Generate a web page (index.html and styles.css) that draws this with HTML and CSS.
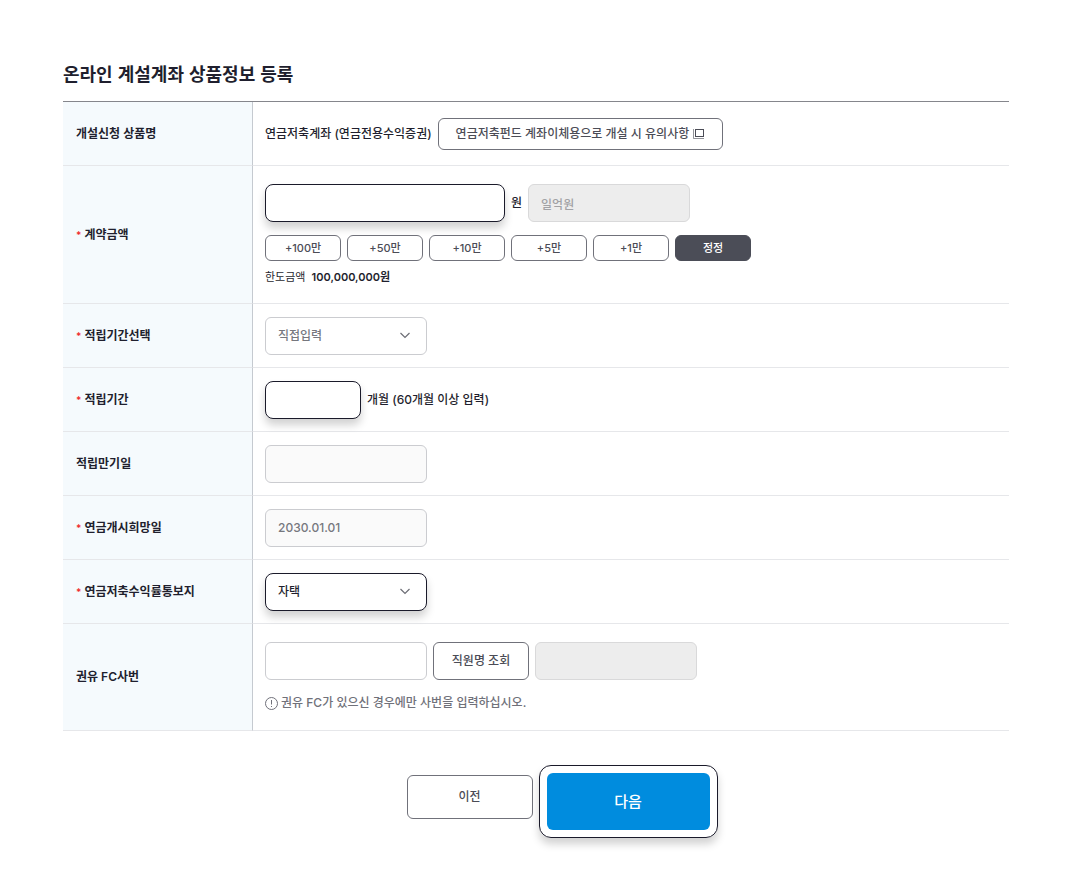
FILE: index.html
```html
<!DOCTYPE html>
<html lang="ko">
<head>
    <meta charset="UTF-8">
    <meta name="viewport" content="width=device-width, initial-scale=1.0">
    <title>온라인 계설계좌 상품정보 등록</title>
    <link rel="stylesheet" href="styles.css">
</head>
<body>
<main class="page">
    <h1 class="title">온라인 계설계좌 상품정보 등록</h1>

    <form onsubmit="return false">
        <table class="form-table">
            <tr>
                <th scope="row">개설신청 상품명</th>
                <td>
                    <div class="line">
                        <span>연금저축계좌 (연금전용수익증권)</span>
                        <button type="button" class="btn btn-notice">
                            연금저축펀드 계좌이체용으로 개설 시 유의사항
                            <svg width="12" height="12" viewBox="0 0 12 12" fill="none" stroke="currentColor">
                                <rect x="2.5" y="1.5" width="8" height="7"/>
                                <path d="M0.5 1v9.500h10.500" stroke-opacity="0.6"/>
                            </svg>
                        </button>
                    </div>
                </td>
            </tr>
            <tr>
                <th scope="row"><label for="amount"><span class="required">*</span>계약금액</label></th>
                <td class="stack">
                    <div class="line">
                        <input type="text" id="amount" class="field field-wide active">
                        <label for="amount">원</label>
                        <input type="text" class="field disabled" value="일억원" aria-label="한글 금액" disabled>
                    </div>
                    <div class="line amounts">
                        <button type="button" class="btn btn-small">+100만</button>
                        <button type="button" class="btn btn-small">+50만</button>
                        <button type="button" class="btn btn-small">+10만</button>
                        <button type="button" class="btn btn-small">+5만</button>
                        <button type="button" class="btn btn-small">+1만</button>
                        <button type="button" class="btn btn-small btn-dark">정정</button>
                    </div>
                    <p class="limit">한도금액 <strong>100,000,000원</strong></p>
                </td>
            </tr>
            <tr>
                <th scope="row"><label for="term-type"><span class="required">*</span>적립기간선택</label></th>
                <td>
                    <div class="select">
                        <select id="term-type" class="field muted">
                            <option>직접입력</option>
                        </select>
                        <svg class="chevron" width="12" height="12" viewBox="0 0 12 12" fill="none" stroke="currentColor" stroke-width="1.2"><path d="M1.500 4L6 8.500 10.500 4"/></svg>
                    </div>
                </td>
            </tr>
            <tr>
                <th scope="row"><label for="term"><span class="required">*</span>적립기간</label></th>
                <td>
                    <div class="line">
                        <input type="text" id="term" class="field field-short active">
                        <label for="term">개월 (60개월 이상 입력)</label>
                    </div>
                </td>
            </tr>
            <tr>
                <th scope="row"><label for="maturity">적립만기일</label></th>
                <td><input type="text" id="maturity" class="field readonly" readonly></td>
            </tr>
            <tr>
                <th scope="row"><label for="start-date"><span class="required">*</span>연금개시희망일</label></th>
                <td><input type="text" id="start-date" class="field readonly" value="2030.01.01" readonly></td>
            </tr>
            <tr>
                <th scope="row"><label for="notice"><span class="required">*</span>연금저축수익률통보지</label></th>
                <td>
                    <div class="select">
                        <select id="notice" class="field active">
                            <option>자택</option>
                        </select>
                        <svg class="chevron" width="12" height="12" viewBox="0 0 12 12" fill="none" stroke="currentColor" stroke-width="1.2"><path d="M1.500 4L6 8.500 10.500 4"/></svg>
                    </div>
                </td>
            </tr>
            <tr>
                <th scope="row"><label for="fc">권유 FC사번</label></th>
                <td class="stack">
                    <div class="line">
                        <input type="text" id="fc" class="field">
                        <button type="button" class="btn btn-search">직원명 조회</button>
                        <input type="text" class="field disabled" aria-label="직원명" disabled>
                    </div>
                    <p class="help">
                        <svg width="13" height="13" viewBox="0 0 13 13" fill="none" stroke="currentColor">
                            <circle cx="6.5" cy="6.5" r="6"/>
                            <path d="M6.500 3v4.500M6.500 9v1"/>
                        </svg>
                        권유 FC가 있으신 경우에만 사번을 입력하십시오.
                    </p>
                </td>
            </tr>
        </table>

        <div class="actions">
            <button type="button" class="btn btn-prev">이전</button>
            <div class="next-frame">
                <button type="submit" class="btn btn-next">다음</button>
            </div>
        </div>
    </form>
</main>
</body>
</html>
```
FILE: styles.css
```css
* {
    box-sizing: border-box;
}
body {
    margin: 0;
    background: #fff;
    color: #1f1f2e;
    font-family: Inter, "Noto Sans CJK KR", sans-serif;
    font-size: 12px;
    font-weight: 500;
    line-height: 18px;
}
.page {
    padding: 60px 63px 45px;
}
.title {
    margin: 0 0 15px;
    font-family: "Noto Sans CJK KR", sans-serif;
    font-size: 18px;
    font-weight: 600;
    line-height: 26px;
}
.form-table {
    width: 100%;
    border-collapse: separate;
    border-spacing: 0;
    border-top: 1px solid #85868c;
}
.form-table th,
.form-table td {
    height: 64px;
    padding: 12px;
    border-bottom: 1px solid #e6e7ea;
    text-align: left;
    vertical-align: middle;
}
.form-table th {
    width: 190px;
    padding-left: 13px;
    border-right: 1px solid #c5cad0;
    background: #f5fafd;
    font-weight: 600;
}
.form-table .stack {
    padding: 18px 12px;
}
.required {
    margin-right: 3px;
    color: #f02d2d;
    font-size: 10px;
}
.line {
    display: flex;
    align-items: center;
    gap: 6px;
}

/* fields */
.field {
    display: block;
    width: 162px;
    height: 38px;
    padding: 0 12px;
    border: 1px solid #cbccd0;
    border-radius: 6px;
    background: #fff;
    color: #1f1f2e;
    font: inherit;
    outline: none;
}
.field-wide {
    width: 240px;
}
.field-short {
    width: 96px;
}
.active {
    border-color: #1a1a2a;
    border-radius: 8px;
    box-shadow: 0 6px 8px rgba(0, 0, 0, 0.18);
}
.muted {
    color: #76777e;
}
.readonly {
    background: #fafafa;
    color: #76777e;
}
.disabled {
    border-color: #d9d9da;
    background: #ededed;
    color: #a2a2a5;
}
.select {
    position: relative;
    width: 162px;
}
.select select {
    appearance: none;
}
.chevron {
    position: absolute;
    top: 12px;
    right: 16px;
    color: #6c6d75;
    pointer-events: none;
}

/* buttons */
.btn {
    padding: 0;
    border: 1px solid #70717a;
    border-radius: 6px;
    background: #fff;
    color: #4b4c56;
    font: inherit;
    cursor: pointer;
}
.btn-notice {
    display: flex;
    align-items: center;
    gap: 4px;
    height: 32px;
    padding: 0 17px;
}
.btn-small {
    width: 76px;
    height: 26px;
    font-size: 11px;
}
.btn-dark {
    border-color: #4b4d57;
    background: #4b4d57;
    color: #fff;
}
.btn-search {
    width: 96px;
    height: 38px;
}
.amounts {
    margin-top: 13px;
}
.limit {
    margin: 8px 0 0;
    font-size: 11px;
    font-weight: 400;
    line-height: 16px;
}
.limit strong {
    margin-left: 3px;
    font-weight: 600;
}
.help {
    display: flex;
    align-items: center;
    gap: 3px;
    margin: 14px 0 0;
    color: #70717a;
}

.actions {
    display: flex;
    justify-content: center;
    align-items: flex-start;
    gap: 6px;
    margin-top: 34px;
    padding-left: 52px;
}
.btn-prev {
    width: 126px;
    height: 44px;
    margin-top: 10px;
}
.next-frame {
    padding: 7px;
    border: 1px solid #1a1a2a;
    border-radius: 12px;
    box-shadow: 0 6px 8px rgba(0, 0, 0, 0.18);
}
.btn-next {
    display: block;
    width: 163px;
    height: 57px;
    border: 0;
    background: #008cde;
    color: #fff;
    font-size: 15px;
}
```
